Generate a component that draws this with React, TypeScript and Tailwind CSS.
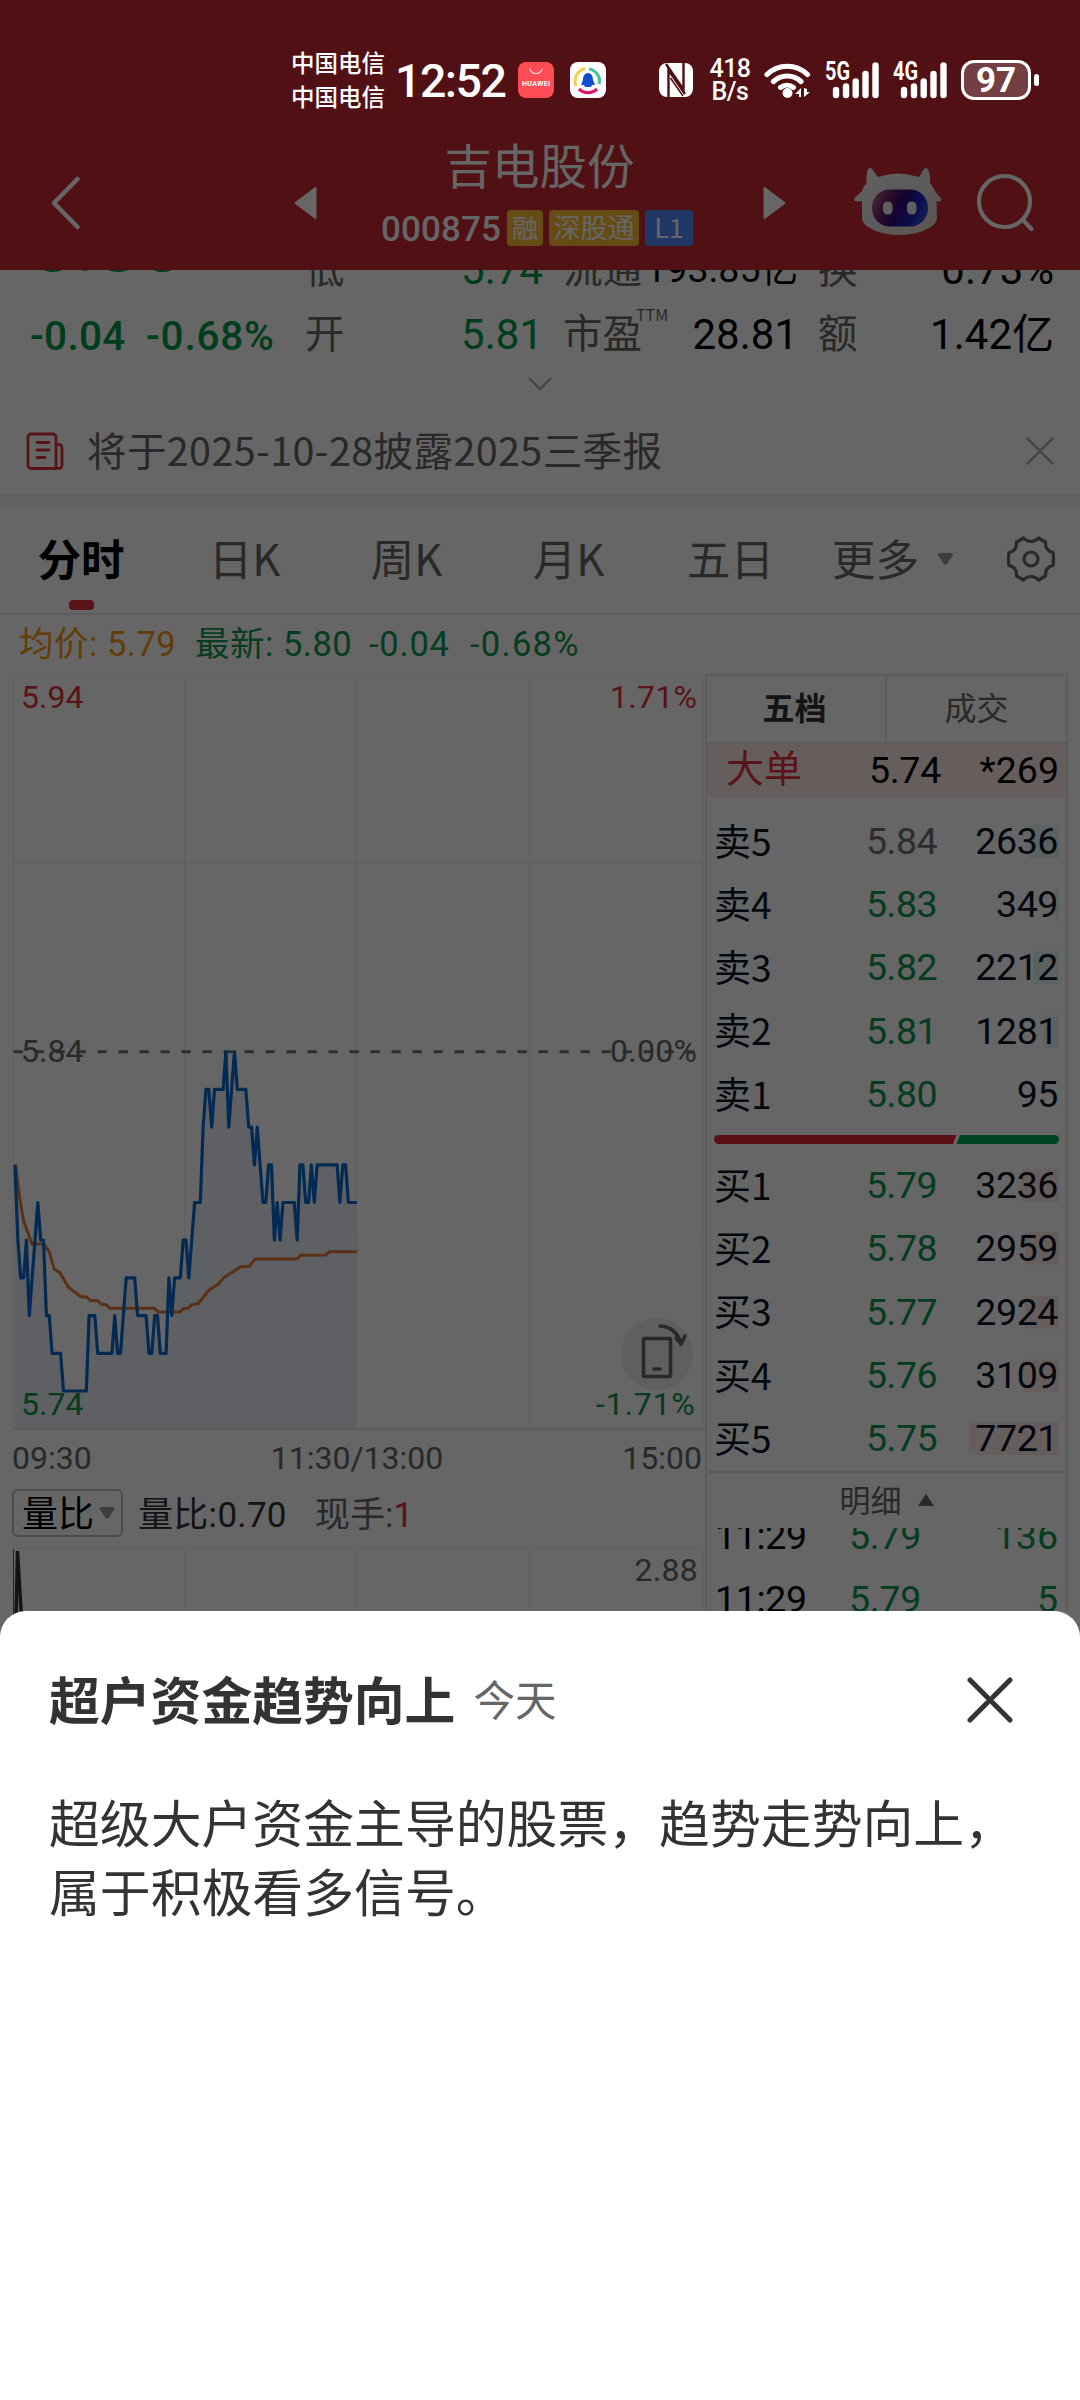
import clsx from 'clsx'

const NUM = "font-['Roboto','Noto_Sans_CJK_SC',sans-serif]"

// Minute prices from 09:30, in cents below the previous close (5.84)
const prices = [
  3, 5, 6, 6, 5, 7, 6, 5, 4, 5, 5, 7, 7, 8, 8, 8, 8, 9, 9, 9, 9, 9, 9, 9, 9, 9, 7, 7, 7, 8,
  8, 8, 8, 8, 8, 7, 8, 8, 7, 6, 6, 6, 6, 7, 7, 7, 7, 8, 8, 7, 7, 8, 8, 8, 6, 7, 6, 6, 6, 5,
  5, 6, 5, 4, 4, 4, 2, 1, 1, 2, 1, 1, 1, 1, 0, 2, 1, 0, 1, 1, 1, 1, 2, 2, 3, 2, 3, 4, 4, 3,
  3, 5, 4, 5, 4, 4, 4, 4, 4, 5, 3, 3, 4, 4, 3, 4, 3, 3, 3, 3, 3, 3, 3, 3, 4, 3, 3, 4, 4, 4, 4,
]

const CLOSE_Y = 377.7
const minuteX = (i: number) => 15 + i * 2.85
const pricePoints = prices.map((p, i) => `${minuteX(i).toFixed(1)},${(CLOSE_Y + p * 37.7).toFixed(1)}`).join(' ')
const areaPoints = `15,754 ${pricePoints} 357,754`

const averagePoints =
  '15.7,490.7 19,519.3 23.3,546 32,570 44,570 49.3,578 54.3,595.3 60,598.7 68.3,613.3 81,622.7 86.7,623 90,626.3 97.7,626.7 101,630 106,630.7 110,634.3 154.3,634.3 158.3,638 180,638 183.3,634.7 188.3,634 191.7,630.7 198.3,629.7 209,616 218.3,610.3 223.3,604 240.7,592.7 249.3,592.3 255,585 297.3,585 300.7,581.3 326,581 329.3,577.7 357.3,577.7'

interface Level {
  label: string
  price: string
  volume: string
  bar: number
}

const asks: Level[] = [
  { label: '卖5', price: '5.84', volume: '2636', bar: 30 },
  { label: '卖4', price: '5.83', volume: '349', bar: 4 },
  { label: '卖3', price: '5.82', volume: '2212', bar: 26 },
  { label: '卖2', price: '5.81', volume: '1281', bar: 15 },
  { label: '卖1', price: '5.80', volume: '95', bar: 1 },
]

const bids: Level[] = [
  { label: '买1', price: '5.79', volume: '3236', bar: 37 },
  { label: '买2', price: '5.78', volume: '2959', bar: 34 },
  { label: '买3', price: '5.77', volume: '2924', bar: 34 },
  { label: '买4', price: '5.76', volume: '3109', bar: 36 },
  { label: '买5', price: '5.75', volume: '7721', bar: 90 },
]

function Signal({ label, className }: { label: string; className?: string }) {
  return (
    <svg className={className} width="56" height="40" viewBox="0 0 56 40" fill="none" stroke="#fff" strokeWidth="6.4" strokeLinecap="round">
      <text x="0" y="20" fill="#fff" stroke="none" fontSize="25.500" fontWeight="700" textLength="25" lengthAdjust="spacingAndGlyphs" fontFamily="Roboto, sans-serif">
        {label}
      </text>
      <path d="M11 30v5M21 26.500v8.500M30.700 21.500v13.500M40.500 14v21M50.500 5.500v29.500" />
    </svg>
  )
}

function StatusBar() {
  return (
    <div className="relative z-20 flex h-[120px] items-center pt-10 text-white">
      <div className="ml-[291px] w-[104px] pb-[2px] font-medium text-[23.5px] leading-[34px]">
        <div>中国电信</div>
        <div>中国电信</div>
      </div>
      <span className={`${NUM} w-[123px] pt-[2px] font-medium text-[46.500px] leading-none tracking-[-1.500px]`}>12:52</span>
      <svg width="36" height="36" viewBox="0 0 36 36">
        <rect width="36" height="36" rx="8" fill="#fe4c55" />
        <path d="M12 6.500a6 5 0 0 0 12 0" fill="none" stroke="#ffd5d5" strokeWidth="1.200" />
        <text x="4" y="23.500" fontSize="7" fontWeight="700" fill="#fff" textLength="28" fontFamily="Roboto, sans-serif">HUAWEI</text>
      </svg>
      <svg className="ml-4" width="36" height="36" viewBox="0 0 36 36" fill="none" strokeWidth="3.200">
        <rect width="36" height="36" rx="8" fill="#fff" />
        <path d="M6 24A13 13 0 0 1 15 6.500" stroke="#f7cf4e" />
        <path d="M19 7a12 12 0 0 1 10 15" stroke="#46c4a0" />
        <path d="M9 27a13 13 0 0 0 18 0" stroke="#d9166d" />
        <path d="M18 11c4 0 5 4 5 7l2 5h-3l-1 2h-6l-1-2h-3l2-5c0-3 1-7 5-7z" fill="#1050d0" />
      </svg>
      <svg className="ml-[53px]" width="34" height="34" viewBox="0 0 34 34" fill="none">
        <rect width="34" height="34" rx="8" fill="#fff" />
        <g stroke="#4f1015" strokeWidth="2.400">
          <path d="M9.500 34V7L26 31" />
          <path d="M24.500 0V26.500L7 1" />
          <path d="M11.500 15 24 33" strokeWidth="1.600" />
        </g>
      </svg>
      <div className={`${NUM} ml-[15px] w-[44px] text-center font-medium text-[25px] leading-[23px] tracking-[-0.5px]`}>
        <div>418</div>
        <div>B/s</div>
      </div>
      <svg className="ml-[12px]" width="48" height="38" viewBox="0 0 48 38" fill="none" stroke="#fff" strokeWidth="5.200" strokeLinecap="round">
        <path d="M3 13.500a29 29 0 0 1 40.500 0M9.500 20.500a20 20 0 0 1 27.500 0M16.500 26.500a10.500 10.500 0 0 1 13 0" />
        <circle cx="23.500" cy="32" r="5" fill="#fff" stroke="none" />
        <path d="M37 27v9h-2v-3h-4zM40 27v9l6-5h-3v-3z" fill="#fff" stroke="none" />
      </svg>
      <Signal label="5G" className="ml-[13px]" />
      <Signal label="4G" className="ml-[12px]" />
      <div className={`${NUM} ml-[12px] flex h-10 w-[70px] items-center justify-center rounded-[13px] border-[3px] border-white bg-white/20 font-bold text-[35px] leading-none`}>
        97
      </div>
      <div className="ml-[3px] h-3 w-[5px] rounded-full bg-white" />
    </div>
  )
}

function Robot() {
  return (
    <svg className="ml-[67px]" width="90" height="72" viewBox="0 0 90 72">
      <defs>
        <linearGradient id="shell" x1="0" y1="0" x2="1" y2="1">
          <stop offset="0" stopColor="#f4f4f4" />
          <stop offset="0.6" stopColor="#e4e0e0" />
          <stop offset="1" stopColor="#e8d4c0" />
        </linearGradient>
        <linearGradient id="visor" x1="0" y1="0.100" x2="1" y2="0.400">
          <stop offset="0" stopColor="#b07898" />
          <stop offset="0.3" stopColor="#702068" />
          <stop offset="0.55" stopColor="#300878" />
          <stop offset="0.85" stopColor="#1a20c8" />
          <stop offset="1" stopColor="#2848d0" />
        </linearGradient>
      </defs>
      <path
        d="M13.500 16Q13 7 15 2.500Q16.500 0 19 2L25 10Q45 3 66 10L71 2Q73.500 0 75 2.500Q77.500 7 77 16Q81 21 82.500 25L88 31.500Q89.500 34 86 34.500L83.500 34L84 50Q84 56 78 60Q65 68 46 68Q27 68 15 60Q9 56 9 50L9 34L4 34.500Q0 34 2 30.500L9 24Q10 20 13.500 16Z"
        fill="url(#shell)"
      />
      <rect x="19" y="22.500" width="56" height="37" rx="18" fill="url(#visor)" />
      <rect x="30" y="34.500" width="9.500" height="13" rx="4.500" fill="#eee" />
      <rect x="54" y="34.500" width="9.500" height="13" rx="4.500" fill="#eee" />
    </svg>
  )
}

function NavBar() {
  return (
    <div className="flex h-[150px] items-center pt-4 text-white">
      <svg className="ml-[51px]" width="29" height="54" viewBox="0 0 29 54" fill="none" stroke="currentColor" strokeWidth="4.500" strokeLinecap="round" strokeLinejoin="round">
        <path d="M26.500 3 3 27l23.500 24" />
      </svg>
      <svg className="ml-[214px]" width="23" height="34" viewBox="0 0 23 34" fill="currentColor" stroke="currentColor" strokeWidth="2" strokeLinejoin="round">
        <path d="M21.500 2v30L1.500 17z" />
      </svg>
      <div className="mb-[24px] ml-[63px] w-[315px]">
        <div className="h-[60px] pl-[4px] text-center text-[47.500px] leading-[55px]">吉电股份</div>
        <div className="mt-[14px] flex h-9 items-center gap-[6px] text-[27px] leading-none">
          <span className={`${NUM} w-[121px] pt-[2px] pl-[1px] font-medium text-[35px] tracking-[0.1px]`}>000875</span>
          <span className="h-9 w-9 rounded bg-[#ffbe32] text-center leading-[33px] text-[26px]">融</span>
          <span className="h-9 w-[90px] rounded bg-[#ffbe32] text-center leading-[33px]">深股通</span>
          <span className="h-9 w-12 rounded bg-[#508cff] text-center leading-[33px]">L1</span>
        </div>
      </div>
      <svg className="ml-[68px]" width="23" height="34" viewBox="0 0 23 34" fill="currentColor" stroke="currentColor" strokeWidth="2" strokeLinejoin="round">
        <path d="M1.500 2v30l20-15z" />
      </svg>
      <Robot />
      <svg className="ml-[34px]" width="60" height="60" viewBox="0 0 60 60" fill="none" stroke="currentColor" strokeWidth="4.200" strokeLinecap="round">
        <circle cx="27.500" cy="28.500" r="25.500" />
        <path d="m46 47 8.500 9" />
      </svg>
    </div>
  )
}

function QuoteCell({ label, value, sup, small, green }: { label: string; value: string; sup?: string; small?: boolean; green?: boolean }) {
  return (
    <div className="flex h-[65px] items-center justify-between leading-none">
      <span className="relative -top-[4px] text-[39.500px] text-[#666]">
        {label}
        {sup && <span className="absolute -top-[5px] left-[73px] text-[16px]">{sup}</span>}
      </span>
      <span className={clsx(NUM, small ? 'text-[37.500px]' : 'text-[42px]', green ? 'text-[#00994a]' : 'text-black')}>{value}</span>
    </div>
  )
}

function Quote() {
  return (
    <div className="flex h-[130px] flex-col overflow-hidden border-b border-[#f5f5f5]">
      <div className="-mt-[33px] flex">
        <div className={`${NUM} w-[305px] pl-[30px] font-medium text-[#00994a]`}>
          <div className="h-[65px] text-[78px] leading-[15px]">5.80</div>
          <div className="flex h-[65px] gap-[21px] pt-[2px] text-[40.500px] leading-[65px]">
            <span className="w-[95px] tracking-[0.3px]">-0.04</span>
            <span className="tracking-[0.8px]">-0.68%</span>
          </div>
        </div>
        <div className="w-[238px]">
          <QuoteCell label="低" value="5.74" green />
          <QuoteCell label="开" value="5.81" green />
        </div>
        <div className="ml-5 w-[235px]">
          <QuoteCell label="流通" value="193.85亿" small />
          <QuoteCell label="市盈" value="28.81" sup="TTM" />
        </div>
        <div className="ml-5 w-[236px]">
          <QuoteCell label="换" value="0.73%" />
          <QuoteCell label="额" value="1.42亿" />
        </div>
      </div>
      <svg className="mx-auto mt-[10px]" width="26" height="14" viewBox="0 0 26 14" fill="none" stroke="#b0b0b0" strokeWidth="2.400">
        <path d="m2 1 11 11L24 1" />
      </svg>
    </div>
  )
}

function Notice() {
  return (
    <div className="flex h-[93px] items-center pt-2 text-[#666]">
      <svg className="ml-[26px]" width="38" height="38" viewBox="0 0 38 38" fill="none" stroke="#d9343a" strokeWidth="2.800" strokeLinecap="round" strokeLinejoin="round">
        <path d="M30 36.500H5a3 3 0 0 1-3-3V5a3 3 0 0 1 3-3h22a3 3 0 0 1 3 3v31.500zM30 12.500h3a3 3 0 0 1 3 3v18a3 3 0 0 1-6 0M11 10.500h12M11 18h12M11 25.500h8" />
      </svg>
      <span className="-mt-1 ml-[23px] text-[39.500px] leading-none tracking-[0.400px]">将于2025-10-28披露2025三季报</span>
      <svg className="mr-[26px] ml-auto" width="28" height="28" viewBox="0 0 28 28" stroke="#b4b4b4" strokeWidth="2.600" strokeLinecap="round">
        <path d="m1.500 1.500 25 25M26.500 1.500l-25 25" />
      </svg>
    </div>
  )
}

function PeriodTabs() {
  return (
    <div className="flex h-[110px] items-center border-b-2 border-[#ececec] text-[43.500px] leading-none text-[#666]">
      <div className="relative w-[162px] text-center font-bold text-black">
        <span className="relative -top-px">分时</span>
        <div className="absolute top-[63px] left-[69px] h-[10px] w-[25px] rounded bg-[#e0323a]" />
      </div>
      {['日K', '周K', '月K', '五日'].map((tab) => (
        <div key={tab} className="w-[162px] pb-[2px] pl-[3px] text-center">{tab}</div>
      ))}
      <div className="ml-[22px] flex items-center gap-[19px]">
        <span className="pb-[2px]">更多</span>
        <svg width="15" height="12" viewBox="0 0 15 12" fill="#999"><path d="M0 2Q0 0 2 0h11q2 0 2 2L9 11q-1.500 1.500-3 0z" /></svg>
      </div>
      <svg className="ml-[54px]" width="48" height="46" viewBox="0 0 48 46" fill="none" stroke="#666" strokeWidth="3.200" strokeLinejoin="round">
        <circle cx="24" cy="23" r="7" />
        <path d="M16.500 2q3 3.500 7.500 3.500T31.500 2l7 4q-.5 9 7.500 10.500Q47 23 46 29.500 38 31 38.500 40l-7 4q-3-3.500-7.500-3.500T16.500 44l-7-4Q10 31 2 29.500q-1-6.500 0-13Q10 15 9.500 6z" />
      </svg>
    </div>
  )
}

function Chart() {
  return (
    <svg className="block" width="705" height="757" viewBox="0 0 705 757" fill="none" fontFamily="Roboto, sans-serif" fontSize="32">
      <polygon points={areaPoints} fill="#ebf0fa" />
      <path d="M13 .5H703M13 189H703M13 566H703M13.500 0V755M184.500 0V755M356.500 0V755M529.500 0V755M703 0V755" stroke="#ededed" />
      <path d="M13 755H705" stroke="#e6e6e6" strokeWidth="2" />
      <path d="M13.500 377.700H695" stroke="#757575" strokeWidth="3" strokeDasharray="9.300 11.700" />
      <polyline points={averagePoints} stroke="#e07838" strokeWidth="3" />
      <polyline points={pricePoints} stroke="#0869d0" strokeWidth="3.200" strokeLinejoin="round" />
      <g>
        <text x="21" y="34" fill="#e0323a">5.94</text>
        <text x="21" y="387.500" fill="#666">5.84</text>
        <text x="21" y="741" fill="#0f9650">5.74</text>
      </g>
      <g letterSpacing="0.300">
        <text x="610" y="34" fill="#e0323a">1.71%</text>
        <text x="610" y="387.500" fill="#666">0.00%</text>
        <text x="596" y="741" fill="#0f9650" letterSpacing="0.800">-1.71%</text>
      </g>
      <circle cx="657" cy="680" r="36" fill="#000" fillOpacity="0.070" />
      <g stroke="#666" strokeWidth="3.600" strokeLinecap="round" strokeLinejoin="round">
        <rect x="643.500" y="664.500" width="27" height="38" rx="1" />
        <path d="M654 695h6M660 652q16 1 21 17M676 664l5 6 4-8" />
      </g>
    </svg>
  )
}

function VolumeChart() {
  return (
    <svg className="mt-[11px] block" width="705" height="70" viewBox="0 0 705 70" fill="none">
      <path d="M13 .5H703M184.500 0V70M356.500 0V70M529.500 0V70M703 0V70" stroke="#ececec" />
      <path d="M13.500 1V70" stroke="#555" />
      <path d="M16 70 17.500 3 21.500 70" stroke="#333" strokeWidth="3.400" />
      <text x="698" y="33" fill="#666" fontSize="32" textAnchor="end" letterSpacing="0.300" fontFamily="Roboto, sans-serif">2.88</text>
    </svg>
  )
}

function LevelRow({ level, tone }: { level: Level; tone: 'ask' | 'bid' }) {
  return (
    <div className="flex h-[63.250px] items-center text-[37.500px] leading-none text-[#0c1428]">
      <span className="w-[152px] pb-[3px] text-[37px]">{level.label}</span>
      <span className={clsx(NUM, 'tracking-[-0.5px]', level.price === '5.84' ? 'text-[#707070]' : 'text-[#0f9650]')}>{level.price}</span>
      <div className={`${NUM} relative ml-auto pr-[1px] tracking-[-0.4px]`}>
        <div
          className={clsx('absolute top-[2px] right-0 h-[33px]', tone === 'ask' ? 'bg-[#e3f7f0]' : 'bg-[#ffe8e8]')}
          style={{ width: level.bar }}
        />
        <span className="relative">{level.volume}</span>
      </div>
    </div>
  )
}

function TradeRow({ volume }: { volume: string }) {
  return (
    <div className={`${NUM} flex h-[63px] items-center text-[37.500px] leading-none text-[#0f9650]`}>
      <span className="w-[134px]"><span className="text-black tracking-[-0.3px]">11:29</span></span>
      <span className="tracking-[-0.3px]">5.79</span>
      <span className="ml-auto">{volume}</span>
    </div>
  )
}

function OrderBook() {
  return (
    <div className="h-[937px] w-[363px] overflow-hidden border-x-2 border-t-2 border-[#e6e6e6]">
      <div className="flex h-[68px] border-b-2 border-[#e6e6e6] text-center text-[32px] leading-[60px]">
        <div className="w-[180px] border-r-2 border-[#e6e6e6] pr-[3px] font-bold text-[#333]">五档</div>
        <div className="flex-1 text-[#666]">成交</div>
      </div>
      <div className="-mx-[2px] flex h-[54px] items-center bg-[#ffe9e9] pr-[9px] text-[37.500px] leading-none text-black">
        <span className="mt-[-11px] w-[164px] pl-[21px] text-[38px] text-[#e0323a]">大单</span>
        <span className={`${NUM} tracking-[-0.3px]`}>5.74</span>
        <span className={`${NUM} ml-auto`}>*269</span>
      </div>
      <div className="mt-[12px] pr-[7px] pl-[7px]">
        {asks.map((level) => <LevelRow key={level.label} level={level} tone="ask" />)}
      </div>
      <svg className="mt-[9px] ml-[7px] block" width="345" height="9" viewBox="0 0 345 9">
        <path d="M4.500 0H242.500L239 9H4.500a4.500 4.500 0 0 1 0-9z" fill="#e02a2e" />
        <path d="M246 0H340.500a4.500 4.500 0 0 1 0 9H242.500z" fill="#00a854" />
      </svg>
      <div className="mt-[10px] pr-[7px] pl-[7px]">
        {bids.map((level) => <LevelRow key={level.label} level={level} tone="bid" />)}
      </div>
      <div className="flex h-[57px] items-center justify-center gap-[16px] border-t-2 border-[#e0e0e0] text-[31px] leading-none text-[#666]">
        <span className="pb-[3px]">明细</span>
        <svg width="16" height="12" viewBox="0 0 16 12" fill="#666"><path d="M0 12 8 0l8 12z" /></svg>
      </div>
      <div className="h-[84px] overflow-hidden pr-[8px] pl-[8px]">
        <div className="-mt-[22px]">
          <TradeRow volume="136" />
          <TradeRow volume="5" />
        </div>
      </div>
    </div>
  )
}

function SignalSheet() {
  return (
    <div className="absolute inset-x-0 top-[1611px] z-30 h-[789px] rounded-t-[26px] bg-white px-[49px] text-[#333]">
      <div className="flex h-[176px] items-center pt-[2px]">
        <h2 className="-mt-1 font-bold text-[50.800px] leading-none">超户资金趋势向上</h2>
        <span className="-mt-[3px] ml-[18px] text-[41.500px] leading-none text-[#666]">今天</span>
        <svg className="mr-[18px] ml-auto" width="46" height="46" viewBox="0 0 46 46" stroke="#333" strokeWidth="5" strokeLinecap="round">
          <path d="m3 3 40 40M43 3 26 20M20 26 3 43" />
        </svg>
      </div>
      <p className="text-[50.850px] leading-[69px]">超级大户资金主导的股票，趋势走势向上，属于积极看多信号。</p>
    </div>
  )
}

export default function App() {
  return (
    <div className="relative h-[2400px] w-[1080px] overflow-hidden bg-white font-['Noto_Sans_CJK_SC',sans-serif]">
      <header className="h-[270px] bg-[#c72834]">
        <StatusBar />
        <NavBar />
      </header>
      <Quote />
      <Notice />
      <div className="h-3 bg-[#f2f2f2]" />
      <PeriodTabs />
      <div className={`${NUM} flex h-[59px] items-center pb-px pl-[19px] text-[34.500px] leading-none tracking-[0.500px] text-[#0f9650]`}>
        <span className="w-[176px] text-[#f59a14]">均价: 5.79</span>
        <span className="w-[174px]">最新: 5.80</span>
        <span className="w-[101px] tracking-[0.8px]">-0.04</span>
        <span className="tracking-[1.3px]">-0.68%</span>
      </div>
      <div className="flex">
        <div className="w-[705px]">
          <Chart />
          <div className={`${NUM} flex h-[58px] items-center justify-between pr-[3px] pb-[5px] pl-[12px] text-[32px] leading-none text-[#666]`}>
            <span>09:30</span>
            <span>11:30/13:00</span>
            <span>15:00</span>
          </div>
          <div className={`${NUM} flex h-12 items-center text-[36px] leading-none text-[#333]`}>
            <div className="ml-3 flex h-12 w-[111px] items-center gap-[5px] rounded-md border-2 border-[#bcbcbc] pl-[8px] text-black">
              <span className="pt-[3px]">量比</span>
              <svg width="16" height="12" viewBox="0 0 15 12" fill="#999"><path d="M0 2Q0 0 2 0h11q2 0 2 2L9 11q-1.500 1.500-3 0z" /></svg>
            </div>
            <span className="ml-[15px] w-[177px] pt-[5px] text-[35px] tracking-[0.300px]">量比:0.70</span>
            <span className="pt-[5px] text-[35px] text-[#666]">现手:<span className="text-[#e0323a]">1</span></span>
          </div>
          <VolumeChart />
        </div>
        <OrderBook />
      </div>
      <div className="pointer-events-none absolute inset-0 z-10 bg-black/60" />
      <SignalSheet />
    </div>
  )
}
